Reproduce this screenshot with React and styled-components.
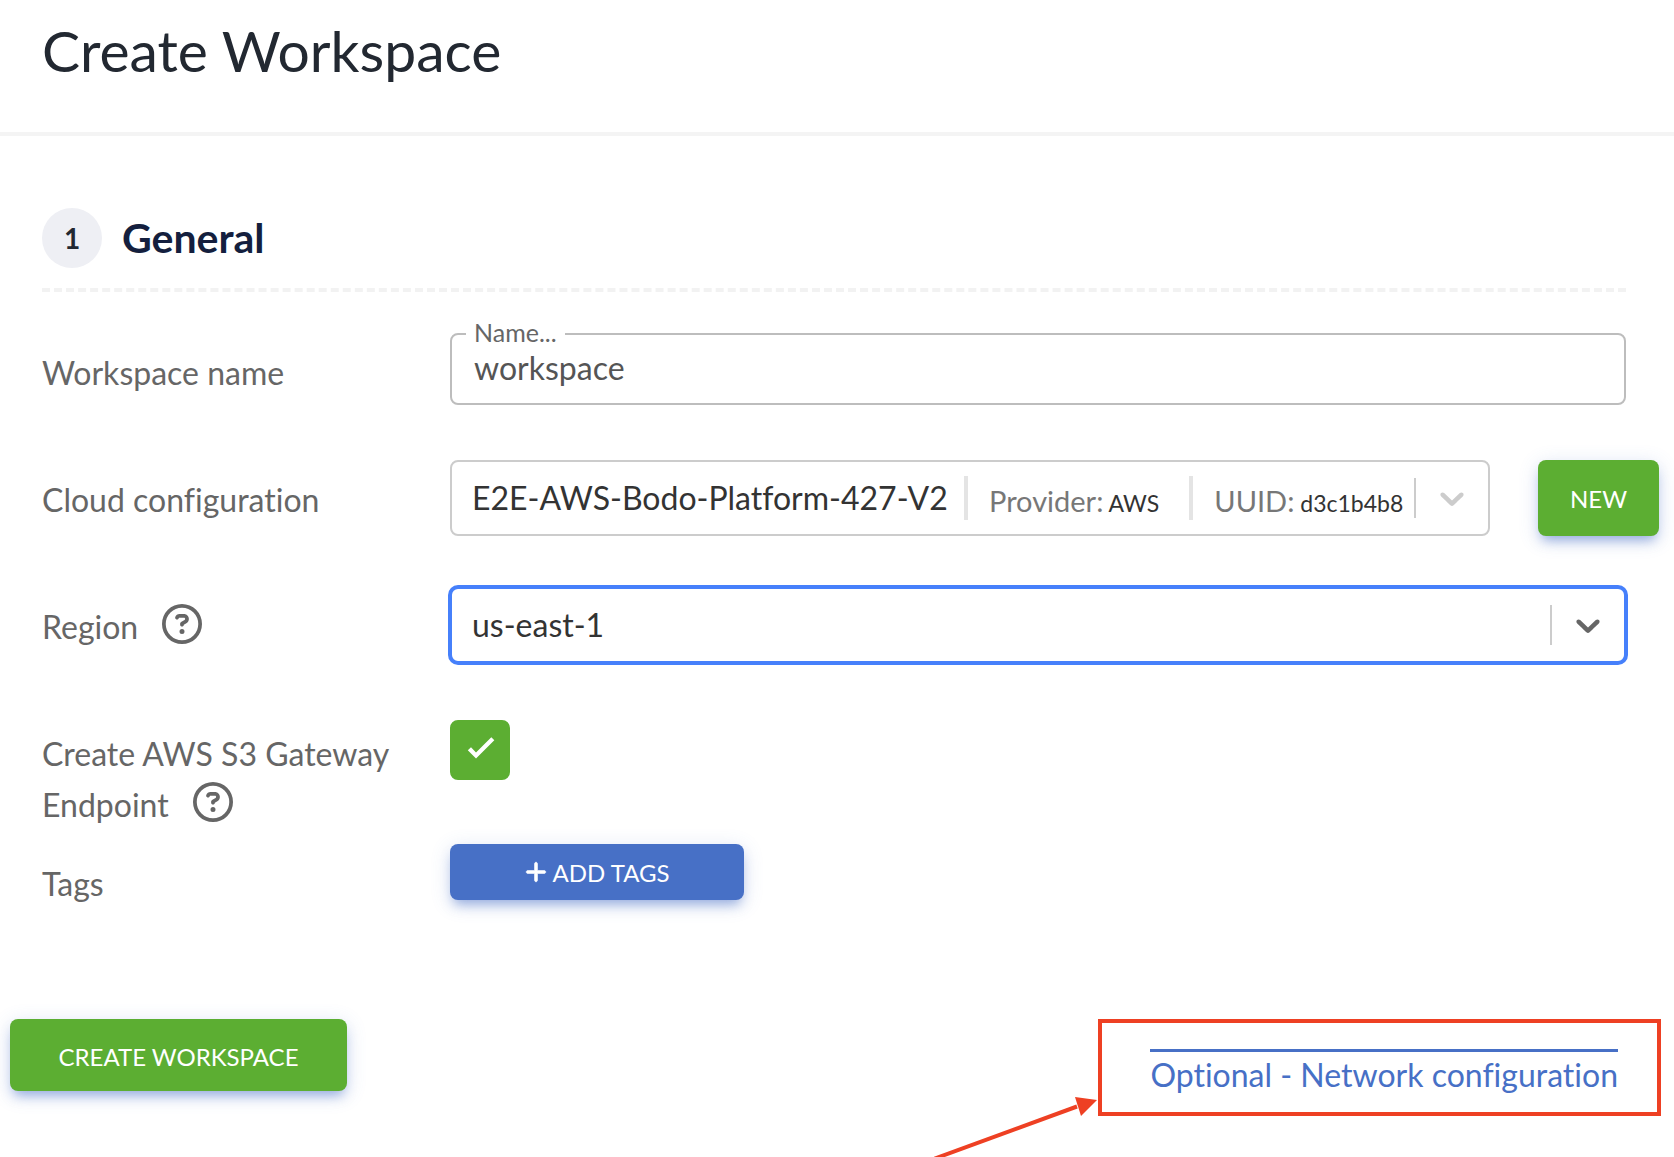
import React, { useState } from "react";
import styled, { createGlobalStyle, css } from "styled-components";
import { FaPlus, FaRegCircleQuestion } from "react-icons/fa6";

const GlobalStyle = createGlobalStyle`
  *, *::before, *::after { box-sizing: border-box; }
  body {
    margin: 0;
    background: #fff;
    color: #666;
    font-family: Lato, "Liberation Sans", sans-serif;
    font-size: 32px;
    font-variant-ligatures: none;
  }
  button, input, select { font-family: inherit; font-variant-ligatures: inherit; }
`;

const Page = styled.main`
  overflow: hidden;
`;

const Header = styled.header`
  padding: 18px 42px 50px;
  border-bottom: 4px solid #f4f4f4;
`;

const Title = styled.h1`
  margin: 0;
  font-size: 57px;
  line-height: 64px;
  font-weight: 400;
  color: #222831;
`;

const Section = styled.section`
  padding: 72px 48px 0 42px;
`;

const SectionHeader = styled.div`
  display: flex;
  align-items: center;
  gap: 20px;
  padding-bottom: 20px;
  margin-bottom: 41px;
  border-bottom: 4px dashed #f2f2f2;
`;

const StepNumber = styled.span`
  display: flex;
  align-items: center;
  justify-content: center;
  width: 60px;
  height: 60px;
  border-radius: 50%;
  background: #eeeff4;
  color: #222831;
  font-size: 28px;
  font-weight: 700;
`;

const SectionTitle = styled.h2`
  margin: 0;
  font-size: 41px;
  line-height: 48px;
  font-weight: 700;
  color: #141f3e;
`;

const Row = styled.div`
  display: grid;
  grid-template-columns: 408px minmax(0, 1fr);
  align-items: start;
  min-height: 127px;
`;

const Label = styled.label`
  padding: 14px 16px 14px 0;
  line-height: 51px;
`;

const HelpIcon = styled(FaRegCircleQuestion)`
  width: 40px;
  height: 40px;
  margin-left: 24px;
  vertical-align: -5px;
`;

const controlBox = css`
  border: 2px solid #ccc;
  border-radius: 8px;
  background: #fff;
`;

const NameField = styled.div`
  ${controlBox}
  position: relative;
  border-color: #bdbdbd;
`;

const FloatingLabel = styled.label`
  position: absolute;
  top: -18px;
  left: 14px;
  padding: 0 8px;
  background: #fff;
  font-size: 25px;
  line-height: 30px;
`;

const TextInput = styled.input`
  display: block;
  width: 100%;
  height: 68px;
  padding: 10px 22px 14px;
  border: 0;
  outline: 0;
  background: transparent;
  color: #555;
  font-size: 32px;
`;

const ControlGroup = styled.div`
  display: flex;
  gap: 48px;
  margin-right: -33px;
`;

const SelectBox = styled.div`
  ${controlBox}
  display: flex;
  flex: 1;
  align-items: center;
  min-width: 0;
  height: 76px;
  ${(p) => p.$active && css`
    border-color: #4680fb;
    box-shadow: 0 0 0 2px #4680fb;
  `}
`;

const Select = styled.select`
  appearance: none;
  flex: ${(p) => (p.$grow ? "1" : "none")};
  height: 72px;
  margin: 0;
  padding: 0 16px 2px 20px;
  border: 0;
  outline: 0;
  background: transparent;
  color: #333;
  font-size: 32px;
`;

const Meta = styled.span`
  height: 44px;
  padding: 5px 0 0 21px;
  border-left: 4px solid #e4e4e4;
  font-size: 29px;
  line-height: 40px;
  white-space: nowrap;
  color: #777;

  & + & { margin-left: 30px; }
`;

const MetaValue = styled.span`
  font-size: 23px;
  color: #333;
`;

const Indicator = styled.span`
  display: flex;
  height: 40px;
  margin-left: auto;
  padding: 0 16px;
  border-left: 2px solid #ccc;
  color: ${(p) => (p.$active ? "#666" : "#ccc")};
  pointer-events: none;
`;

const CheckboxWrap = styled.span`
  display: grid;
  width: 60px;
  height: 60px;
  margin-top: 6px;

  & > * { grid-area: 1 / 1; }
`;

const Checkbox = styled.input`
  appearance: none;
  width: 60px;
  height: 60px;
  margin: 0;
  border: 2px solid #5cae32;
  border-radius: 8px;

  &:checked { background: #5cae32; }
`;

const CheckMark = styled.svg`
  width: 60px;
  height: 60px;
  fill: #fff;
  pointer-events: none;
`;

const Button = styled.button`
  display: flex;
  flex: none;
  align-items: center;
  justify-content: center;
  gap: 4px;
  width: ${(p) => p.$width};
  height: ${(p) => p.$height};
  padding: ${(p) => p.$padding || "0"};
  border: 0;
  border-radius: 8px;
  background: ${(p) => (p.$blue ? "#4770c6" : "#5cae32")};
  box-shadow: 0 8px 12px -4px rgba(71, 112, 198, 0.5), 0 4px 20px rgba(71, 112, 198, 0.2);
  color: #fff;
  font-size: 24px;
  text-transform: uppercase;
  cursor: pointer;
`;

const PlusIcon = styled(FaPlus)`
  stroke: currentColor;
  stroke-width: 12px;
`;

const Footer = styled.footer`
  display: flex;
  align-items: flex-start;
  justify-content: space-between;
  padding: 48px 13px 41px 10px;
`;

const Callout = styled.div`
  position: relative;
  padding: 26px 39px 18px 48px;
  border: 4px solid #ee4023;
`;

const OptionalLink = styled.a`
  display: block;
  padding-top: 4px;
  border-top: 3px solid #4770c6;
  color: #4770c6;
  line-height: 38px;
  text-decoration: none;
`;

const Arrow = styled.svg`
  position: absolute;
  top: 68px;
  right: 100%;
  width: 168px;
  height: 66px;
`;

function Chevron() {
  return (
    <svg width="40" height="40" viewBox="0 0 20 20" fill="currentColor" aria-hidden="true">
      <path d="M4.516 7.548c0.436-0.446 1.043-0.481 1.576 0l3.908 3.747 3.908-3.747c0.533-0.481 1.141-0.446 1.574 0 0.436 0.445 0.408 1.197 0 1.615-0.406 0.418-4.695 4.502-4.695 4.502-0.217 0.223-0.502 0.335-0.787 0.335s-0.57-0.112-0.789-0.335c0 0-4.287-4.084-4.695-4.502s-0.436-1.17 0-1.615z" />
    </svg>
  );
}

export default function App() {
  const [name, setName] = useState("workspace");
  const [gateway, setGateway] = useState(true);

  return (
    <Page>
      <GlobalStyle />
      <Header>
        <Title>Create Workspace</Title>
      </Header>
      <Section>
        <SectionHeader>
          <StepNumber>1</StepNumber>
          <SectionTitle>General</SectionTitle>
        </SectionHeader>

        <Row>
          <Label htmlFor="name">Workspace name</Label>
          <NameField>
            <FloatingLabel htmlFor="name">Name...</FloatingLabel>
            <TextInput id="name" value={name} onChange={(e) => setName(e.target.value)} />
          </NameField>
        </Row>

        <Row>
          <Label htmlFor="cloud">Cloud configuration</Label>
          <ControlGroup>
            <SelectBox>
              <Select id="cloud">
                <option>E2E-AWS-Bodo-Platform-427-V2</option>
              </Select>
              <Meta>Provider:<MetaValue> AWS</MetaValue></Meta>
              <Meta>UUID:<MetaValue> d3c1b4b8</MetaValue></Meta>
              <Indicator><Chevron /></Indicator>
            </SelectBox>
            <Button type="button" $width="121px" $height="76px">New</Button>
          </ControlGroup>
        </Row>

        <Row>
          <Label htmlFor="region">Region<HelpIcon aria-hidden="true" /></Label>
          <SelectBox $active>
            <Select id="region" $grow>
              <option>us-east-1</option>
            </Select>
            <Indicator $active><Chevron /></Indicator>
          </SelectBox>
        </Row>

        <Row>
          <Label htmlFor="gateway">
            Create AWS S3 Gateway Endpoint<HelpIcon aria-hidden="true" />
          </Label>
          <CheckboxWrap>
            <Checkbox
              id="gateway"
              type="checkbox"
              checked={gateway}
              onChange={(e) => setGateway(e.target.checked)}
            />
            {gateway && (
              <CheckMark viewBox="0 0 60 60" aria-hidden="true">
                <path d="M17.8 30.3L21 27.3L26 32.4L41.3 17.3L44.3 20.3L26 38.5Z" />
              </CheckMark>
            )}
          </CheckboxWrap>
        </Row>

        <Row>
          <Label htmlFor="tags">Tags</Label>
          <Button id="tags" type="button" $blue $width="294px" $height="56px">
            <PlusIcon aria-hidden="true" /> Add Tags
          </Button>
        </Row>
      </Section>

      <Footer>
        <Button type="button" $width="337px" $height="72px" $padding="2px 0 0">
          Create Workspace
        </Button>
        <Callout>
          <OptionalLink href="#network">Optional - Network configuration</OptionalLink>
          <Arrow viewBox="0 0 168 66" aria-hidden="true">
            <path d="M-1 68.2L143 15.5" stroke="#ee4023" strokeWidth="4" />
            <path d="M141 6L163 9L147 25Z" fill="#ee4023" />
          </Arrow>
        </Callout>
      </Footer>
    </Page>
  );
}
